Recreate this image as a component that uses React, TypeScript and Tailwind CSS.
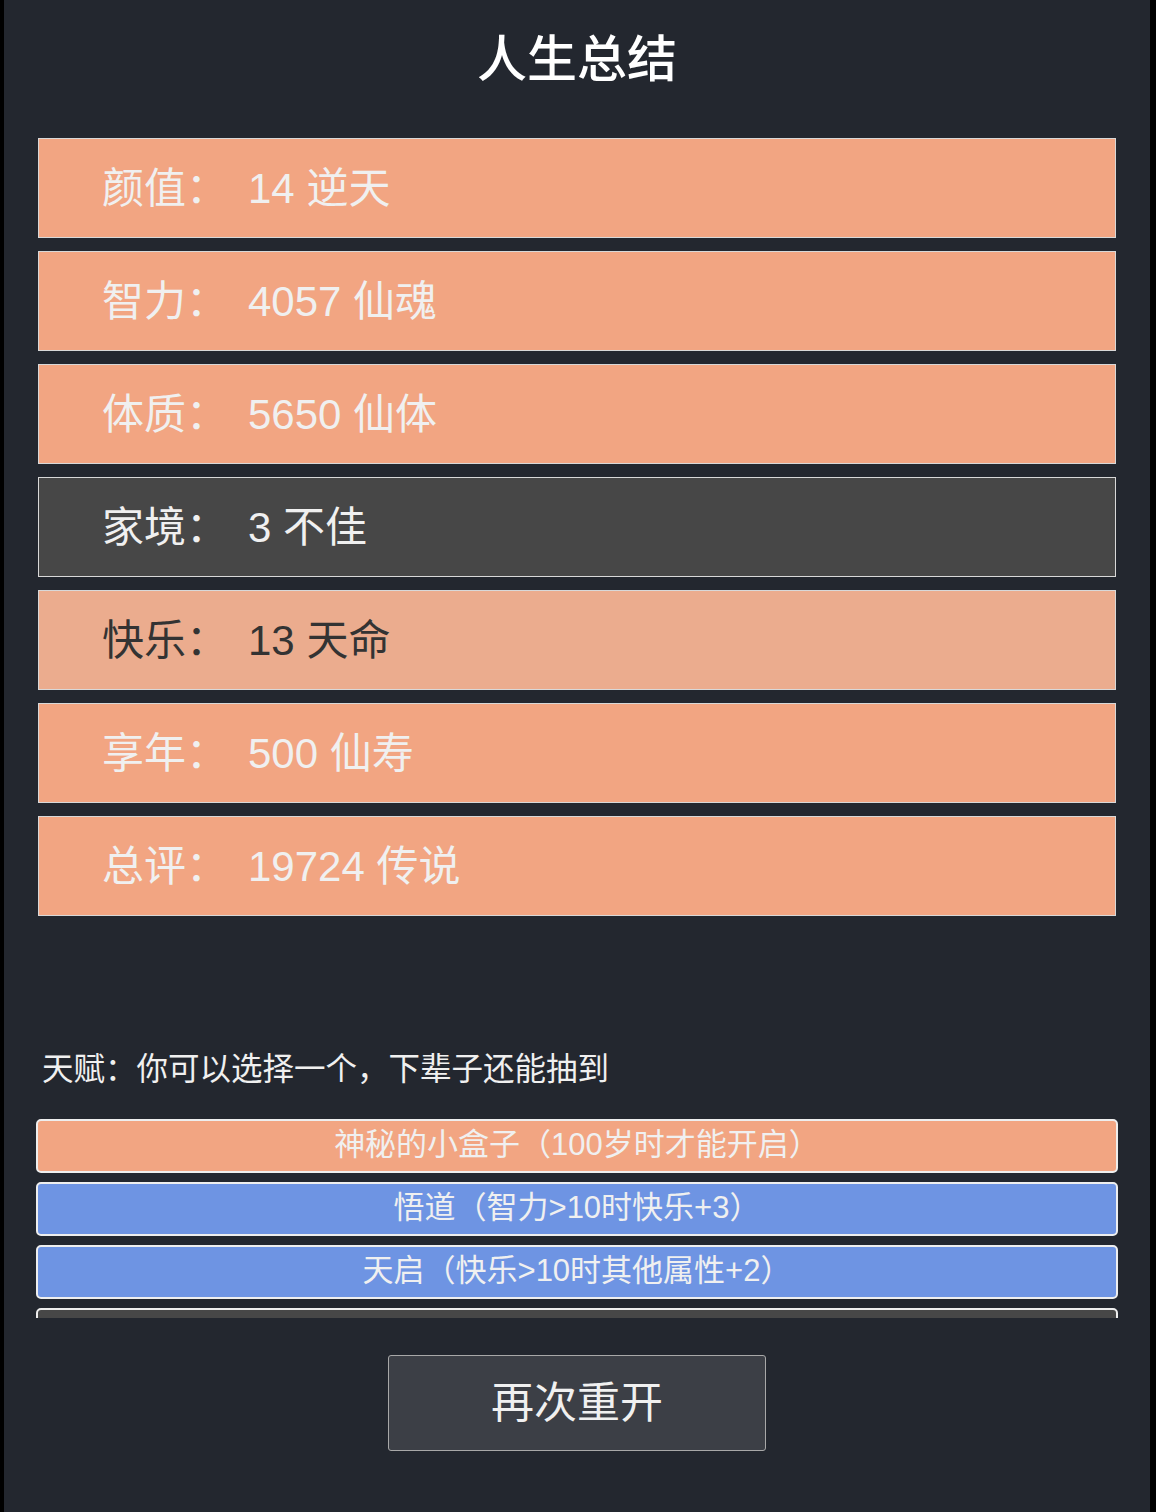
import React from "react";

type Row = {
  label: string;
  value: string;
  tone: "orange" | "gray" | "light";
};

const ROWS: Row[] = [
  { label: "颜值：", value: "14 逆天", tone: "orange" },
  { label: "智力：", value: "4057 仙魂", tone: "orange" },
  { label: "体质：", value: "5650 仙体", tone: "orange" },
  { label: "家境：", value: "3 不佳", tone: "gray" },
  { label: "快乐：", value: "13 天命", tone: "light" },
  { label: "享年：", value: "500 仙寿", tone: "orange" },
  { label: "总评：", value: "19724 传说", tone: "orange" },
];

const ROW_STYLES: Record<Row["tone"], string> = {
  orange: "bg-[#f2a582] text-[#f0f0f0]",
  gray: "bg-[#474747] text-[#f0f0f0]",
  light: "bg-[#ebac8e] text-[#333333]",
};

const TALENTS = [
  { text: "神秘的小盒子（100岁时才能开启）", bg: "bg-[#f2a582]" },
  { text: "悟道（智力>10时快乐+3）", bg: "bg-[#6e94e3]" },
  { text: "天启（快乐>10时其他属性+2）", bg: "bg-[#6e94e3]" },
  { text: "", bg: "bg-[#474747]" },
];

export default function App() {
  return (
    <div
      className="flex h-[1512px] w-full bg-black"
      style={{
        fontFamily: '"Liberation Sans", "Noto Sans CJK SC", sans-serif',
      }}
    >
      <main className="ml-[4px] mr-[6px] flex flex-1 flex-col bg-[#23272f]">
        {/* Title */}
        <h1 className="mt-[30px] h-[60px] text-center text-[50px] leading-[60px] font-medium text-white">
          人生总结
        </h1>

        {/* Summary rows */}
        <ul className="mx-[34px] mt-[48px] flex flex-col gap-[13px]">
          {ROWS.map((r) => (
            <li
              key={r.label}
              className={`flex h-[100px] items-center border border-[#d8d8d8] pl-[63px] text-[42px] ${ROW_STYLES[r.tone]}`}
            >
              <span className="inline-block w-[146px]">{r.label}</span>
              <span>{r.value}</span>
            </li>
          ))}
        </ul>

        {/* Talents */}
        <p className="mt-[133px] ml-[38px] text-[31.5px] leading-[40px] text-[#f0f0f0]">
          天赋：你可以选择一个，下辈子还能抽到
        </p>

        <div className="mx-[32px] mt-[30px] h-[199px] overflow-hidden">
          <ul className="flex flex-col gap-[9px]">
            {TALENTS.map((t, i) => (
              <li
                key={i}
                className={`flex h-[54px] items-center justify-center rounded-[5px] border-2 border-[#eeeeee] pb-[2px] text-[31px] text-[#f0f0f0] ${t.bg}`}
              >
                {t.text}
              </li>
            ))}
          </ul>
        </div>

        {/* Restart */}
        <div className="mt-[37px] flex justify-center">
          <button
            type="button"
            className="h-[96px] w-[378px] rounded-[3px] border border-[#a8a8a8] bg-[#3c3f46] text-[43px] text-[#f0f0f0]"
          >
            再次重开
          </button>
        </div>
      </main>
    </div>
  );
}
